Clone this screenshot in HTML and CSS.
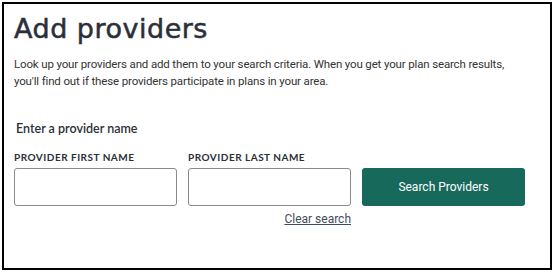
FILE: index.html
```html
<!DOCTYPE html>
<html lang="en">
<head>
    <meta charset="UTF-8">
    <meta name="viewport" content="width=device-width, initial-scale=1.0">
    <title>Add providers</title>
    <link rel="stylesheet" href="styles.css">
</head>
<body>
    <div class="frame">
        <h1 class="title">Add providers</h1>
        <p class="intro">Look up your providers and add them to your search criteria. When you get your plan search results, you'll find out if these providers participate in plans in your area.</p>

        <form class="provider-form" onsubmit="return false;">
            <h2 class="form-heading">Enter a provider name</h2>
            <div class="fields">
                <div class="field">
                    <label class="field-label" for="first-name">Provider first name</label>
                    <input class="field-input" id="first-name" type="text">
                </div>
                <div class="field">
                    <label class="field-label" for="last-name">Provider last name</label>
                    <input class="field-input" id="last-name" type="text">
                    <a href="#" class="clear-link">Clear search</a>
                </div>
                <div class="field field-action">
                    <button class="search-btn" type="submit">Search Providers</button>
                </div>
            </div>
        </form>
    </div>
</body>
</html>
```

FILE: styles.css
```css
/* Global Styles */
:root {
    --text-color: #333;
    --heading-color: #2b2f38;
    --primary-color: #17695b;
    --input-border: #8a8a8a;
    --link-color: #3f4b5e;
}

body {
    margin: 0;
    padding: 0;
    font-family: Roboto, 'Liberation Sans', sans-serif;
    color: var(--text-color);
    background-color: #fff;
}

.frame {
    box-sizing: border-box;
    width: 550px;
    height: 268px;
    margin: 2px;
    border: 2px solid #000;
    padding: 7px 10px;
}

.title {
    margin: 0;
    font-family: 'DejaVu Sans', Lato, sans-serif;
    font-weight: 500;
    font-size: 27px;
    line-height: 36px;
    color: var(--heading-color);
    letter-spacing: 0.5px;
    -webkit-text-stroke: 0.5px var(--heading-color);
}

.intro {
    max-width: 515px;
    margin: 9px 0 0;
    font-size: 11.5px;
    line-height: 17px;
    letter-spacing: -0.15px;
    color: var(--text-color);
}

.provider-form {
    margin-top: 31px;
}

.form-heading {
    margin: 0 0 0 2px;
    font-family: Lato, 'Noto Sans', sans-serif;
    font-weight: 600;
    font-size: 12.5px;
    line-height: 16px;
    color: var(--heading-color);
}

.fields {
    display: grid;
    grid-template-columns: 163px 163px 163px;
    column-gap: 11px;
    margin-top: 14px;
}

.field {
    display: flex;
    flex-direction: column;
}

.field-label {
    font-family: Lato, 'Noto Sans', sans-serif;
    font-weight: 700;
    font-size: 10px;
    line-height: 12px;
    letter-spacing: 0.5px;
    text-transform: uppercase;
    color: var(--heading-color);
    margin-bottom: 5px;
}

.field-input {
    box-sizing: border-box;
    height: 38px;
    margin: 0;
    border: 1px solid var(--input-border);
    border-radius: 3px;
    font-size: 13px;
    padding: 0 8px;
}

.clear-link {
    align-self: flex-end;
    margin-top: 6px;
    font-size: 12px;
    color: var(--link-color);
    text-decoration: underline;
}

.field-action {
    justify-content: flex-start;
}

.search-btn {
    box-sizing: border-box;
    height: 38px;
    margin-top: 17px;
    border: none;
    border-radius: 3px;
    background-color: var(--primary-color);
    color: #fff;
    font-family: Roboto, 'Liberation Sans', sans-serif;
    font-size: 12px;
    cursor: pointer;
}
```
